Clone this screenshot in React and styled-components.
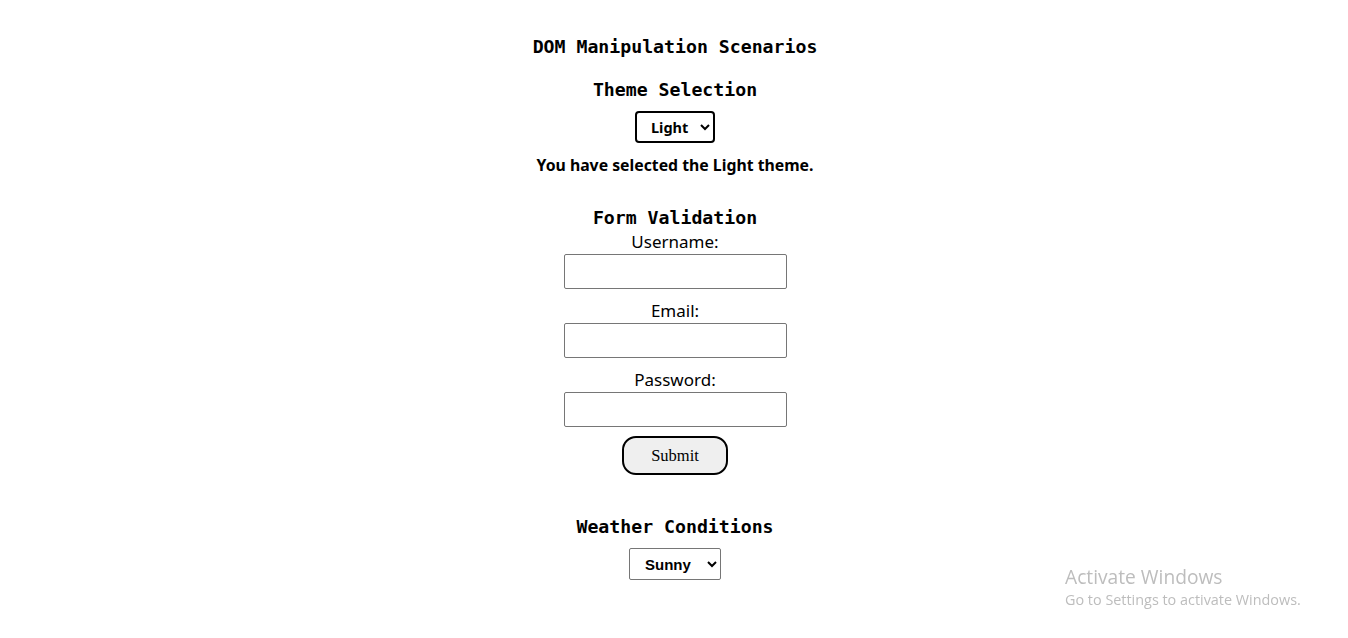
import React, { useState } from 'react';
import styled, { createGlobalStyle } from 'styled-components';

const GlobalStyle = createGlobalStyle`
  html, body {
    margin: 0;
    padding: 0;
    background: #ffffff;
  }
  body {
    font-family: "Noto Sans", sans-serif;
    color: #000;
  }
`;

const Page = styled.div`
  min-height: 638px;
  display: flex;
  flex-direction: column;
  align-items: center;
  padding: 35px 0 0 2px;
  box-sizing: border-box;
`;

const Heading = styled.h2`
  margin: ${(p) => p.$margin || '0'};
  font-family: "DejaVu Sans Mono", "Liberation Mono", monospace;
  font-weight: bold;
  font-size: 18.2px;
  line-height: 24px;
`;

const Section = styled.section`
  display: flex;
  flex-direction: column;
  align-items: center;
`;

const ThemeSelect = styled.select`
  width: 80px;
  height: 32px;
  margin-top: 9px;
  border: 2px solid #000;
  border-radius: 4px;
  background: #fff;
  font-family: "Noto Sans", sans-serif;
  font-weight: bold;
  font-size: 14.5px;
  padding: 0 4px 0 10px;
`;

const Message = styled.p`
  margin: 12px 0 0;
  font-family: "Noto Sans", sans-serif;
  font-weight: bold;
  font-size: 15.8px;
  line-height: 20px;
`;

const Form = styled.form`
  display: flex;
  flex-direction: column;
  align-items: center;
`;

const Label = styled.label`
  font-family: "Noto Sans", sans-serif;
  font-size: 17px;
  line-height: 22px;
  margin-top: ${(p) => p.$top || '11px'};
`;

const Input = styled.input`
  width: 223px;
  height: 35px;
  box-sizing: border-box;
  margin-top: 1px;
  border: 1px solid #767676;
  border-radius: 2px;
`;

const SubmitButton = styled.button`
  width: 106px;
  height: 39px;
  margin-top: 9px;
  border: 2px solid #000;
  border-radius: 14px;
  background: #efefef;
  font-family: "Liberation Serif", serif;
  font-size: 16.5px;
  color: #000;
`;

const WeatherSelect = styled.select`
  width: 92px;
  height: 32px;
  margin-top: 9px;
  border: 1px solid #767676;
  border-radius: 2px;
  background: #fff;
  font-family: "Liberation Sans", Arial, sans-serif;
  font-weight: bold;
  font-size: 15px;
  padding: 0 4px 0 11px;
`;

const Watermark = styled.div`
  position: fixed;
  left: 1065px;
  top: 565px;
  font-family: "Open Sans", "Noto Sans", sans-serif;
  color: #bdbdbd;
  pointer-events: none;
`;

const WatermarkTitle = styled.div`
  font-size: 19.2px;
  line-height: 24px;
`;

const WatermarkText = styled.div`
  font-size: 14.4px;
  line-height: 21px;
`;

export default function App() {
  const [theme, setTheme] = useState('Light');
  const [weather, setWeather] = useState('Sunny');

  return (
    <>
      <GlobalStyle />
      <Page>
        <Heading>DOM Manipulation Scenarios</Heading>

        <Section>
          <Heading $margin="19px 0 0">Theme Selection</Heading>
          <ThemeSelect value={theme} onChange={(e) => setTheme(e.target.value)}>
            <option>Light</option>
            <option>Dark</option>
          </ThemeSelect>
          <Message>You have selected the {theme} theme.</Message>
        </Section>

        <Section>
          <Heading $margin="31px 0 0">Form Validation</Heading>
          <Form onSubmit={(e) => e.preventDefault()}>
            <Label $top="1px" htmlFor="username">Username:</Label>
            <Input id="username" type="text" />
            <Label htmlFor="email">Email:</Label>
            <Input id="email" type="email" />
            <Label htmlFor="password">Password:</Label>
            <Input id="password" type="password" />
            <SubmitButton type="submit">Submit</SubmitButton>
          </Form>
        </Section>

        <Section>
          <Heading $margin="40px 0 0">Weather Conditions</Heading>
          <WeatherSelect value={weather} onChange={(e) => setWeather(e.target.value)}>
            <option>Sunny</option>
            <option>Rainy</option>
            <option>Cloudy</option>
          </WeatherSelect>
        </Section>
      </Page>
      <Watermark>
        <WatermarkTitle>Activate Windows</WatermarkTitle>
        <WatermarkText>Go to Settings to activate Windows.</WatermarkText>
      </Watermark>
    </>
  );
}
